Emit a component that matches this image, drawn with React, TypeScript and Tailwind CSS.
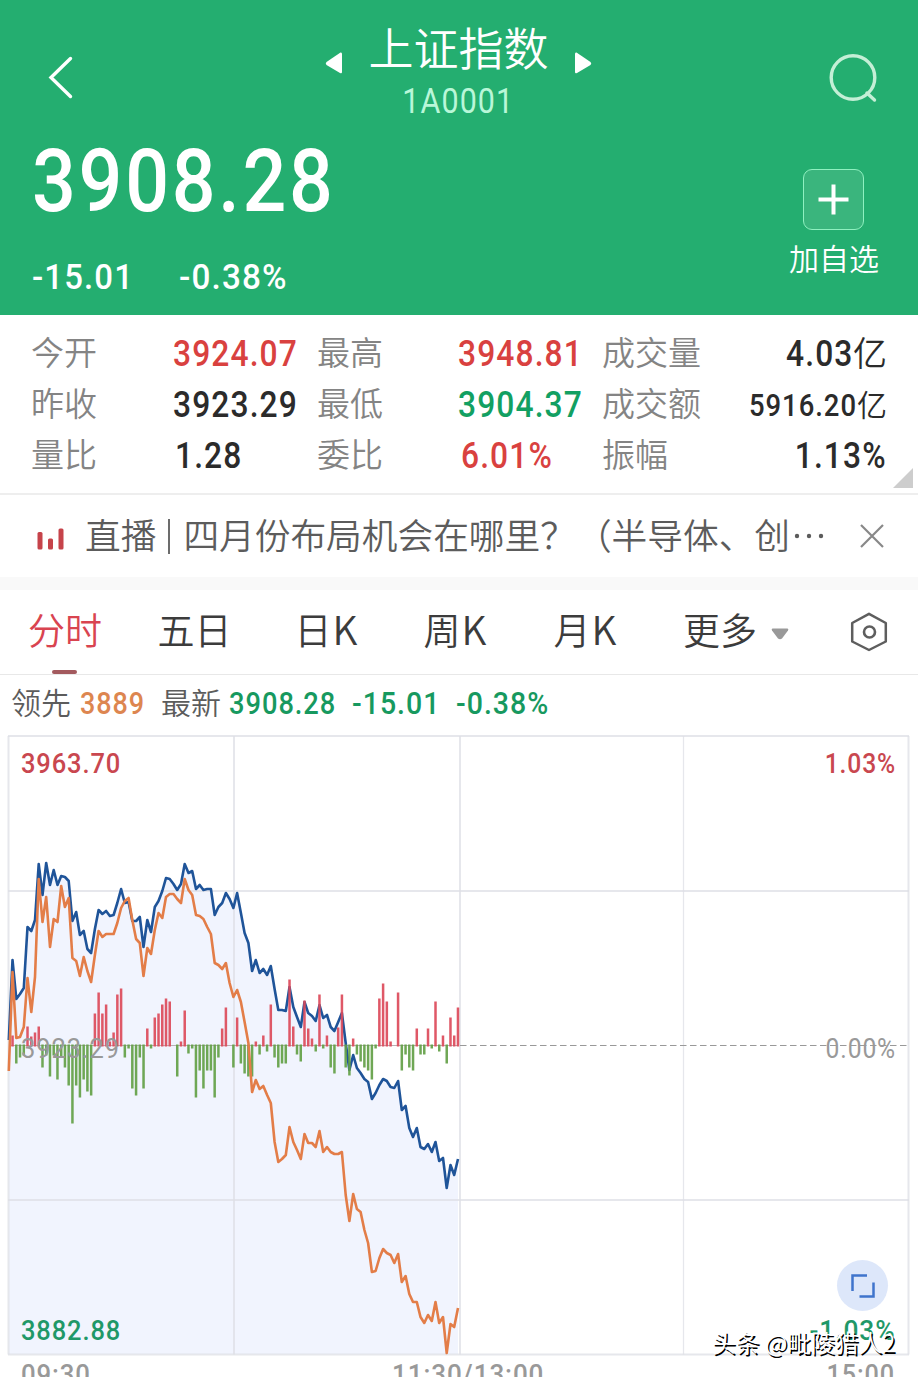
import type { ReactNode } from "react";
import clsx from "clsx";

// one value per minute, 09:30 - 11:30, in chart pixels
const price = [
    305, 225, 264, 259, 253, 192, 196, 185, 129, 160, 128, 150, 135, 150, 141, 142, 146, 186, 177, 200,
    196, 214, 218, 194, 175, 179, 176, 181, 180, 168, 154, 168, 167, 186, 186, 182, 212, 185, 197, 172,
    166, 156, 143, 144, 149, 155, 149, 129, 138, 136, 154, 150, 155, 154, 154, 180, 172, 168, 158, 164,
    173, 158, 178, 198, 208, 236, 225, 238, 234, 240, 231, 254, 275, 275, 276, 252, 272, 282, 292, 267,
    278, 281, 286, 270, 283, 280, 292, 296, 287, 278, 308, 335, 320, 333, 338, 344, 347, 364, 358, 350,
    344, 346, 352, 353, 346, 375, 371, 393, 402, 393, 412, 414, 409, 417, 407, 426, 423, 453, 430, 440,
    424
];

const leading = [
    336, 237, 303, 302, 292, 243, 277, 242, 144, 187, 162, 212, 184, 187, 151, 172, 163, 223, 226, 241,
    222, 236, 247, 220, 196, 202, 199, 199, 199, 188, 173, 166, 163, 185, 204, 208, 241, 213, 219, 195,
    178, 183, 162, 159, 159, 164, 168, 144, 155, 160, 180, 181, 184, 192, 199, 228, 230, 234, 228, 248,
    262, 255, 267, 287, 308, 357, 345, 354, 351, 360, 368, 407, 427, 424, 420, 392, 407, 415, 424, 399,
    408, 408, 412, 396, 417, 412, 417, 419, 419, 417, 460, 486, 459, 474, 477, 495, 508, 537, 536, 523,
    514, 518, 520, 528, 519, 547, 541, 559, 567, 567, 582, 588, 580, 586, 567, 588, 582, 618, 589, 592,
    573
];

const momentum = [
    0, 10, -18, -12, -10, 19, 9, 13, 19, -22, -10, -31, -10, -34, -12, -22, -40, -78, -40, -52,
    -34, -46, -50, 32, 53, 32, 41, 4, 13, 51, 57, -12, -3, -43, -50, -12, -43, 17, -3, 28,
    32, 41, 47, 44, 0, -31, 4, 35, -8, -3, -52, -25, -43, -25, -25, -52, -12, 17, 38, 0,
    -22, 28, -18, -28, -31, -31, 4, -9, 10, -6, 41, -12, -22, -18, -18, 66, 19, -9, -16, 45,
    17, 7, -6, 51, -3, 10, -22, -28, 18, 51, -22, -30, 7, -9, -16, -22, -25, -34, -3, 47,
    62, 44, 4, 0, 53, -25, -9, -22, -25, 17, -9, -9, 17, -3, 44, -6, 10, -18, 28, 10,
    38
];

const BASE = 310.5;
const xAt = (i: number) => 8.8 + i * 3.743;
const toPoints = (values: number[]) => values.map((v, i) => `${xAt(i).toFixed(1)},${v}`).join(" ");

const stats = [
    { label: "今开", value: "3924.07", color: "text-[#d9413f]" },
    { label: "最高", value: "3948.81", color: "text-[#d9413f]" },
    { label: "成交量", value: "4.03", unit: "亿", color: "text-[#2b2b2b]" },
    { label: "昨收", value: "3923.29", color: "text-[#2b2b2b]" },
    { label: "最低", value: "3904.37", color: "text-[#12a062]" },
    { label: "成交额", value: "5916.20", unit: "亿", small: true, color: "text-[#2b2b2b]" },
    { label: "量比", value: "1.28", color: "text-[#2b2b2b]" },
    { label: "委比", value: "6.01%", color: "text-[#d9413f]" },
    { label: "振幅", value: "1.13%", color: "text-[#2b2b2b]" }
];

const tabs = [
    { label: "分时", width: "w-[129.5px]", active: true },
    { label: "五日", width: "w-[137px]" },
    { label: "日", k: true, width: "w-[129px]" },
    { label: "周", k: true, width: "w-[130px]" },
    { label: "月", k: true, width: "w-[129.5px]" }
];

function Num({ className, children }: { className?: string; children: ReactNode }) {
    return (
        <span className={clsx("inline-block whitespace-nowrap font-['Roboto',sans-serif] tracking-[0.035em]", className)}>
            {children}
        </span>
    );
}

function Header() {
    return (
        <header className="h-[315px] bg-[#24ae70] text-white">
            <div className="flex h-[130px] pl-[47px] pr-[40px]">
                <svg className="mt-[56px] h-[43px] w-[26px]" viewBox="0 0 26 43" fill="none" stroke="currentColor" strokeWidth="3.4">
                    <path d="M23.500 2.500L4 21.500L23.500 40.500" strokeLinecap="round" />
                </svg>
                <div className="ml-[252px] flex w-[267px] justify-between">
                    <svg className="mt-[51px] h-[24px] w-[18px]" viewBox="0 0 18 24" fill="currentColor">
                        <path d="M15.500 1.500Q17 1 17 3V21Q17 23 15 22L1.500 14Q0 12.500 1.500 11Z" />
                    </svg>
                    <div className="flex flex-col items-center pt-[18px]">
                        <h1 className="text-[45px] font-[350] leading-[58px]">上证指数</h1>
                        <Num className="mt-[3px] scale-x-[0.87] text-[35px] font-normal leading-[46px] text-[#b9f7d8]">1A0001</Num>
                    </div>
                    <svg className="mt-[51px] h-[24px] w-[18px]" viewBox="0 0 18 24" fill="currentColor">
                        <path d="M2.500 1.500Q1 1 1 3V21Q1 23 3 22L16.500 14Q18 12.500 16.500 11Z" />
                    </svg>
                </div>
                <svg className="ml-auto mt-[53px] h-[50px] w-[50px]" viewBox="0 0 50 50" fill="none" stroke="#c4efd6" strokeWidth="3.400">
                    <circle cx="25" cy="24.500" r="21.800" />
                    <path d="M39 40L46.500 47" strokeLinecap="round" />
                </svg>
            </div>
            <div className="flex justify-between pl-[32px] pr-[39px]">
                <div className="flex flex-col">
                    <Num className="-mt-px origin-left scale-x-[0.877] text-[88px] font-medium leading-[104px]">3908.28</Num>
                    <div className="mt-[24px] flex text-[35px] font-medium leading-[42px]">
                        <Num className="w-[147px] origin-left scale-x-[0.94]">-15.01</Num>
                        <Num className="origin-left scale-x-[0.95]">-0.38%</Num>
                    </div>
                </div>
                <div className="flex flex-col items-center pt-[39px]">
                    <div className="mr-[2px] flex h-[61px] w-[61px] items-center justify-center rounded-[9px] border border-[#8ff0c0] bg-[#3ab57d]">
                        <svg className="h-[31px] w-[31px]" viewBox="0 0 31 31" stroke="currentColor" strokeWidth="4">
                            <path d="M15.500 0.500V30.500M0.500 15.500H30.500" />
                        </svg>
                    </div>
                    <span className="mt-[5px] text-[30px] font-[350] leading-[44px]">加自选</span>
                </div>
            </div>
        </header>
    );
}

function Stats() {
    return (
        <section className="relative h-[180px] border-b-2 border-[#eeeeee] pl-[31px] pr-[31px] pt-[12px]">
            <div className="grid grid-cols-[286px_285px_1fr]">
                {stats.map((s, i) => (
                    <div key={s.label} className={clsx("flex h-[51.300px] items-center", i % 3 === 2 && "justify-between")}>
                        <span className={clsx("pb-[3px] text-[33px] font-[350] leading-none text-[#848484]", i % 3 !== 2 && "w-[144px]")}>
                            {s.label}
                        </span>
                        <div className={clsx("flex items-center", s.color)}>
                            <Num
                                className={clsx(
                                    "pt-[3px] font-medium",
                                    i % 3 === 2 ? "origin-right" : "origin-left",
                                    s.small ? "scale-x-[0.9] text-[30.500px]" : "scale-x-[0.87] text-[36.500px]"
                                )}
                            >
                                {s.value}
                            </Num>
                            {s.unit && (
                                <span className={clsx("pb-[2px] font-[350] leading-none", s.small ? "text-[30px]" : "text-[34px]")}>
                                    {s.unit}
                                </span>
                            )}
                        </div>
                    </div>
                ))}
            </div>
            <svg className="absolute right-[5px] top-[153px] h-[20px] w-[20px]" viewBox="0 0 20 20">
                <path d="M20 0V20H0Z" fill="#cdcdcd" />
            </svg>
        </section>
    );
}

function LiveBanner() {
    return (
        <section className="flex h-[82px] items-center pl-[37px] pr-[34px]">
            <svg className="mt-[6px] h-[22px] w-[28px] shrink-0" viewBox="0 0 28 22" fill="#c6434a">
                <rect x="0.500" y="4" width="5" height="17.500" rx="1.500" />
                <rect x="11" y="10.500" width="5" height="11" rx="1.500" />
                <rect x="21.500" y="0.500" width="5" height="21" rx="1.500" />
            </svg>
            <p className="-mt-[4px] ml-[20px] flex whitespace-nowrap text-[35.700px] font-[350] leading-[50px] text-[#5c5c5c]">
                <span>直播</span>
                <span className="ml-[12px] mr-[13px] mt-[10px] h-[35px] w-[2px] bg-[#6c6c6c]" />
                <span>四月份布局机会在哪里？（半导体、创</span>
            </p>
            <svg className="ml-[4px] h-[6px] w-[32px]" viewBox="0 0 32 6" fill="#5c5c5c">
                <circle cx="3" cy="3" r="2.200" />
                <circle cx="15" cy="3" r="2.200" />
                <circle cx="27" cy="3" r="2.200" />
            </svg>
            <svg className="ml-auto h-[24px] w-[24px] shrink-0" viewBox="0 0 24 24" stroke="#888888" strokeWidth="2.200">
                <path d="M1 1L23 23M23 1L1 23" />
            </svg>
        </section>
    );
}

function PeriodTabs() {
    return (
        <nav className="flex h-[85px] border-b border-[#e8e8e8] pl-[28px] text-[37px] font-[350] leading-[79px] text-[#3c3c3c]">
            {tabs.map((t) => (
                <div key={t.label} className={clsx("relative", t.width, t.active && "text-[#d94450]")}>
                    {t.label}
                    {t.k && <span className="ml-[1px] text-[39px] leading-none">K</span>}
                    {t.active && <span className="absolute bottom-0 left-[24px] h-[4px] w-[25px] rounded-[2px] bg-[#a35a5e]" />}
                </div>
            ))}
            <div className="flex">
                更多
                <svg className="ml-[14px] mt-[38px] h-[12px] w-[18px]" viewBox="0 0 18 12" fill="#999999">
                    <path d="M1.500 0.500H16.500Q18 1 17 2.500L11 10.500Q9 12 7 10.500L1 2.500Q0 1 1.500 0.500Z" />
                </svg>
            </div>
            <svg className="ml-auto mr-[29px] mt-[22px] h-[40px] w-[40px]" viewBox="0 0 40 40" fill="none" stroke="#5e5e5e" strokeWidth="2.500">
                <path d="M20 1.800L36.800 11V29.500L20 38L3.200 29.500V11Z" strokeLinejoin="round" />
                <circle cx="20.500" cy="20" r="5.500" strokeWidth="2.600" />
            </svg>
        </nav>
    );
}

function QuoteLine() {
    return (
        <div className="flex h-[60px] pl-[11px] text-[30px] leading-[53px]">
            <span className="font-[350] text-[#5c5c5c]">领先</span>
            <Num className="ml-[9px] w-[63px] origin-left scale-x-[0.87] pt-[2px] text-[31px] font-medium text-[#dd8650]">3889</Num>
            <span className="ml-[18px] font-[350] text-[#5c5c5c]">最新</span>
            <div className="flex pt-[2px] text-[31px] font-medium text-[#17995f]">
                <Num className="ml-[8px] w-[107px] origin-left scale-x-[0.88]">3908.28</Num>
                <Num className="ml-[16px] w-[88px] origin-left scale-x-[0.92]">-15.01</Num>
                <Num className="ml-[16px] origin-left scale-x-[0.92]">-0.38%</Num>
            </div>
        </div>
    );
}

function Chart() {
    return (
        <section className="relative h-[642px] text-[28px] font-medium leading-[32px]">
            <svg className="block h-[642px] w-[918px]" viewBox="0 0 918 642" fill="none">
                <polygon points={`8.800,619 ${toPoints(price)} ${xAt(120)},619`} fill="#f1f4fe" />
                <g stroke="#dedfe6" strokeOpacity="0.750" strokeWidth="2">
                    <path d="M8 1H909M8 156H909M8 465H909M8 619.500H909" />
                    <path d="M8.500 1V619.500M234 1V619.500M460 1V619.500M908.500 1V619.500" />
                    <path d="M683.500 1V619.500" strokeWidth="1.200" />
                </g>
                <path d="M9 310.500H458" stroke="#b8b0b4" />
                <path d="M460 310.500H909" stroke="#999999" strokeWidth="1.200" strokeDasharray="6.500 3.500" />
                <polyline points={toPoints(price)} stroke="#1f5499" strokeWidth="2.600" strokeLinejoin="round" />
                {momentum.map((v, i) => (
                    <rect
                        key={i}
                        x={xAt(i) - 1.25}
                        y={v > 0 ? BASE - v : BASE - 1}
                        width={2.5}
                        height={v === 0 ? 0 : Math.abs(v) + 1}
                        fill={v > 0 ? "#dc4a5a" : "#63a047"}
                        fillOpacity={0.92}
                    />
                ))}
                <polyline points={toPoints(leading)} stroke="#e37d48" strokeWidth="2.600" strokeLinejoin="round" />
            </svg>
            <Num className="absolute left-[21px] top-[13px] origin-left scale-x-[0.91] text-[#c9474f]">3963.70</Num>
            <Num className="absolute right-[22px] top-[13px] origin-right scale-x-[0.88] text-[#c9474f]">1.03%</Num>
            <Num className="absolute left-[21px] top-[298px] origin-left scale-x-[0.91] font-normal text-[#999999]">3923.29</Num>
            <Num className="absolute right-[22px] top-[298px] origin-right scale-x-[0.88] font-normal text-[#999999]">0.00%</Num>
            <Num className="absolute left-[21px] top-[580px] origin-left scale-x-[0.91] text-[#1f9868]">3882.88</Num>
            <Num className="absolute right-[22px] top-[580px] origin-right scale-x-[0.94] text-[#1f9868]">-1.03%</Num>

            <Num className="absolute left-[21px] top-[624px] origin-left scale-x-[0.92] text-[#999999]">09:30</Num>
            <Num className="absolute left-[392px] top-[624px] origin-left scale-x-[0.93] text-[#999999]">11:30/13:00</Num>
            <Num className="absolute right-[23px] top-[624px] origin-right scale-x-[0.9] text-[#999999]">15:00</Num>

            <div className="absolute left-[837px] top-[525px] flex h-[51px] w-[51px] items-center justify-center rounded-full bg-[#dde7fa]">
                <svg className="h-[24px] w-[24px]" viewBox="0 0 24 24" fill="none" stroke="#3f74cc" strokeWidth="2.500">
                    <path d="M16 1.500H1.500V17M8.500 22.500H22.500V8.500" />
                </svg>
            </div>
            <span className="absolute left-[712px] top-[591px] whitespace-nowrap text-[23.800px] font-[350] text-white [text-shadow:1.5px_1.5px_0.5px_#000]">
                头条 @毗陵猎人2
            </span>
        </section>
    );
}

export default function App() {
    return (
        <div className="h-[1377px] w-[918px] overflow-hidden bg-white font-['Noto_Sans_CJK_SC',sans-serif]">
            <Header />
            <Stats />
            <LiveBanner />
            <div className="h-[13px] bg-[#f9f9f9]" />
            <PeriodTabs />
            <QuoteLine />
            <Chart />
        </div>
    );
}
